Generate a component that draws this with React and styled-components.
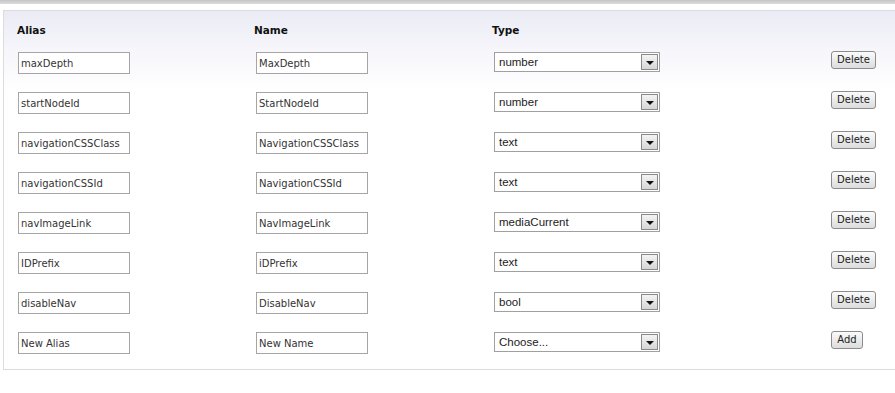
import React from 'react'
import styled, { createGlobalStyle } from 'styled-components'

const GlobalStyle = createGlobalStyle`
  html, body {
    margin: 0;
    padding: 0;
    background: #fff;
  }
  body {
    font-family: "DejaVu Sans", Tahoma, sans-serif;
    font-size: 11px;
    color: #222;
  }
`

const rows = [
  { alias: 'maxDepth', name: 'MaxDepth', type: 'number' },
  { alias: 'startNodeId', name: 'StartNodeId', type: 'number' },
  { alias: 'navigationCSSClass', name: 'NavigationCSSClass', type: 'text' },
  { alias: 'navigationCSSId', name: 'NavigationCSSId', type: 'text' },
  { alias: 'navImageLink', name: 'NavImageLink', type: 'mediaCurrent' },
  { alias: 'IDPrefix', name: 'iDPrefix', type: 'text' },
  { alias: 'disableNav', name: 'DisableNav', type: 'bool' },
]

const Page = styled.div`
  width: 895px;
  height: 393px;
  overflow: hidden;
`

const TopBar = styled.div`
  height: 4px;
  background: linear-gradient(#c4c4c4, #dcdcdc);
  margin-bottom: 6px;
`

const Panel = styled.div`
  margin-left: 3px;
  height: 358px;
  border: 1px solid #dcdcdc;
  border-right: none;
  background: linear-gradient(#ebebf5 0px, #f6f6fb 40px, #ffffff 80px);
  padding-left: 13px;
`

const Grid = styled.div`
  display: grid;
  grid-template-columns: 237px 238px 339px auto;
  grid-template-rows: 41px;
  grid-auto-rows: 40px;
`

const Head = styled.div`
  font-family: "DejaVu Sans", Tahoma, sans-serif;
  font-weight: bold;
  font-size: 10.5px;
  color: #111;
  padding-top: 13px;
`

const Cell = styled.div`
  display: flex;
  align-items: flex-start;
  padding-left: ${p => p.$indent || 0}px;
  margin-top: ${p => p.$shift || 0}px;
`

const TextInput = styled.input`
  box-sizing: border-box;
  width: 112px;
  height: 22px;
  margin: 0;
  padding: 0 2px;
  border: 1px solid #a5a5a5;
  background: #fff;
  font-family: "DejaVu Sans", Tahoma, sans-serif;
  font-size: 10px;
  color: #333;
  outline: none;
`

const SelectBox = styled.div`
  box-sizing: border-box;
  width: 166px;
  height: 20px;
  display: flex;
  align-items: center;
  justify-content: space-between;
  border: 1px solid #a0a0a0;
  background: #fff;
  padding: 0 1px 0 4px;
`

const SelectValue = styled.span`
  font-family: "Liberation Sans", Arial, sans-serif;
  font-size: 11.5px;
  color: #222;
`

const ArrowBtn = styled.span`
  box-sizing: border-box;
  width: 17px;
  height: 16px;
  border: 1px solid #8a8a8a;
  background: linear-gradient(#f4f4f4, #d6d6d6);
  display: flex;
  align-items: center;
  justify-content: center;

  &::after {
    content: '';
    border-left: 4px solid transparent;
    border-right: 4px solid transparent;
    border-top: 4px solid #111;
    margin-top: 1px;
  }
`

const Button = styled.button`
  box-sizing: border-box;
  height: 18px;
  width: ${p => p.$width}px;
  margin: 0;
  padding: 0;
  border: 1px solid #8c8c8c;
  border-radius: 3px;
  background: linear-gradient(#fbfbfb, #dcdcdc);
  font-family: "DejaVu Sans", Tahoma, sans-serif;
  font-size: 10px;
  color: #222;
  line-height: 16px;
`

function Select({ value }) {
  return (
    <SelectBox>
      <SelectValue>{value}</SelectValue>
      <ArrowBtn />
    </SelectBox>
  )
}

function Row({ alias, name, type, isNew }) {
  return (
    <>
      <Cell $indent={1}>
        <TextInput defaultValue={alias} />
      </Cell>
      <Cell $indent={2}>
        <TextInput defaultValue={name} />
      </Cell>
      <Cell $indent={2}>
        <Select value={type} />
      </Cell>
      <Cell $shift={-1}>
        <Button $width={isNew ? 32 : 45}>{isNew ? 'Add' : 'Delete'}</Button>
      </Cell>
    </>
  )
}

export default function App() {
  return (
    <Page>
      <GlobalStyle />
      <TopBar />
      <Panel>
        <Grid>
          <Head>Alias</Head>
          <Head>Name</Head>
          <Head>Type</Head>
          <Head />
          {rows.map(r => (
            <Row key={r.alias} {...r} />
          ))}
          <Row alias="New Alias" name="New Name" type="Choose..." isNew />
        </Grid>
      </Panel>
    </Page>
  )
}
